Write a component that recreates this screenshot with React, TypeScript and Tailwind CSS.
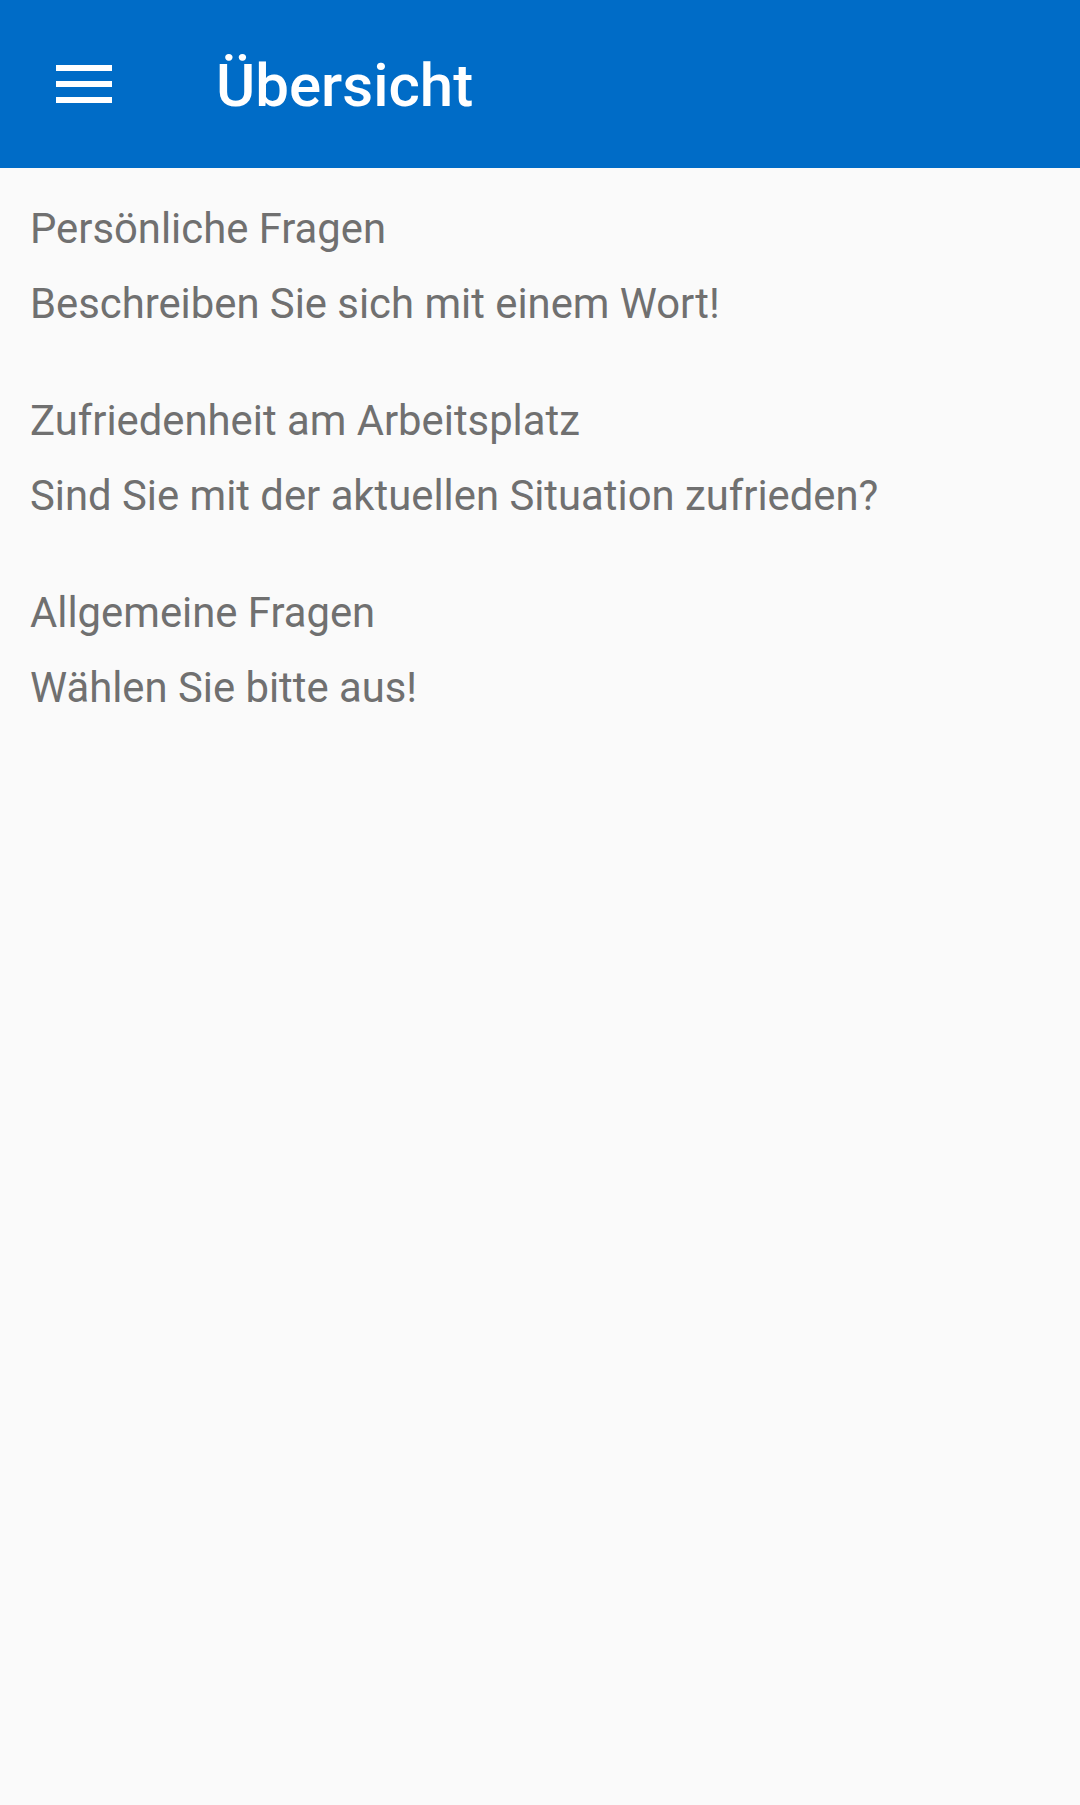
import React from 'react'

const items = [
  { title: 'Persönliche Fragen', question: 'Beschreiben Sie sich mit einem Wort!' },
  { title: 'Zufriedenheit am Arbeitsplatz', question: 'Sind Sie mit der aktuellen Situation zufrieden?' },
  { title: 'Allgemeine Fragen', question: 'Wählen Sie bitte aus!' },
]

const App = () => {
  return (
    <div className="min-h-[1805px] bg-[#fafafa]" style={{ fontFamily: 'Roboto, "Noto Sans", sans-serif' }}>
      <div className="flex h-[168px] items-center bg-[#006cc7]">
        <div className="ml-[56px] flex w-[56px] flex-col gap-[10px]">
          <div className="h-[6px] bg-white" />
          <div className="h-[6px] bg-white" />
          <div className="h-[6px] bg-white" />
        </div>
        <div className="ml-[104px] mt-[4px] text-[60px] font-medium leading-none text-white">Übersicht</div>
      </div>

      <div className="flex flex-col pl-[30px] pt-[23px]">
        {items.map((item) => (
          <div key={item.title} className="flex h-[192px] flex-col text-[41.8px] leading-[75px] text-[#707070]">
            <div>{item.title}</div>
            <div>{item.question}</div>
          </div>
        ))}
      </div>
    </div>
  )
}

export default App
